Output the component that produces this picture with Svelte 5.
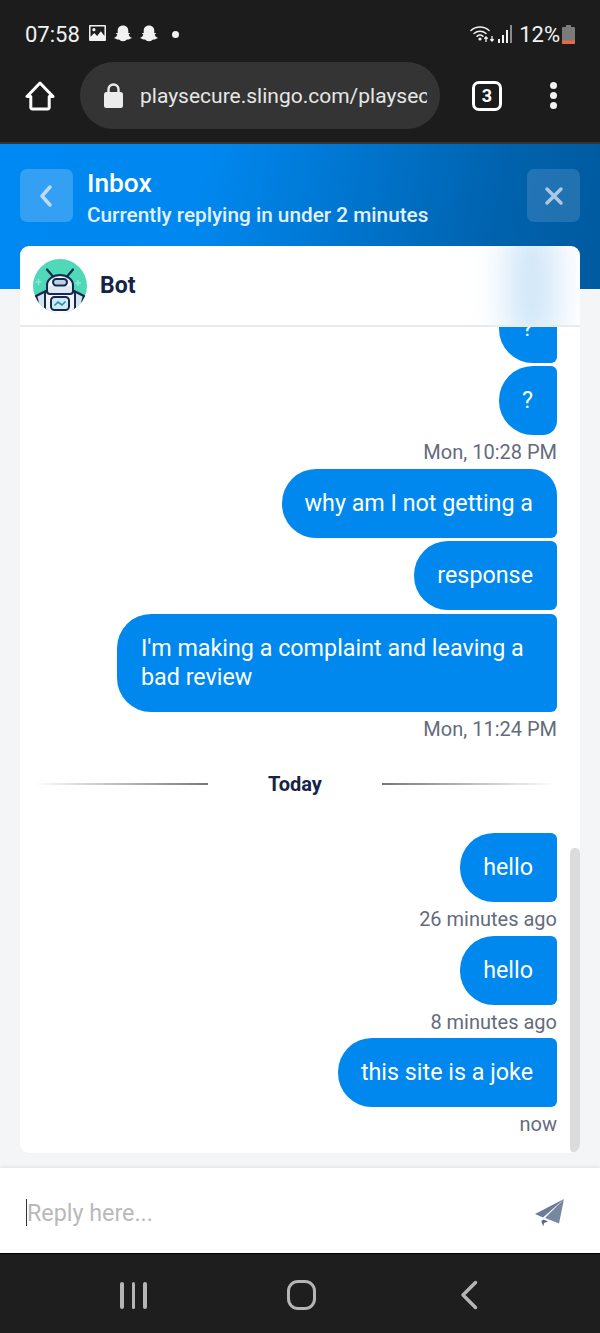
<script>
	const groups = [
		{ items: [{ text: '?', cut: true }, { text: '?', round: true }], time: 'Mon, 10:28 PM' },
		{
			items: [
				{ text: 'why am I not getting a', first: true },
				{ text: 'response' },
				{ text: "I'm making a complaint and leaving a bad review", wide: true }
			],
			time: 'Mon, 11:24 PM'
		}
	];
	const today = [
		{ text: 'hello', time: '26 minutes ago' },
		{ text: 'hello', time: '8 minutes ago' },
		{ text: 'this site is a joke', time: 'now' }
	];
</script>

<div class="phone">
	<div class="chrome">
		<div class="status">
			<span class="clock">07:58</span>
			<svg class="st-pic" viewBox="0 0 18 17" aria-hidden="true">
				<path fill="#f2f2f2" fill-rule="evenodd" d="M1 0h16a1 1 0 0 1 1 1v15a1 1 0 0 1-1 1H1a1 1 0 0 1-1-1V1a1 1 0 0 1 1-1zm.6 1.6v11l4-4 3 3 4-5 3.8 5v-10z" />
				<circle cx="5.2" cy="5" r="1.7" fill="#f2f2f2" />
			</svg>
			{#each [0, 1] as i (i)}
				<svg class="st-ghost" viewBox="0 0 18 18" aria-hidden="true">
					<path fill="#f2f2f2" d="M9 .5c3.400 0 5.300 2.400 5.300 5.300 0 .9 0 1.500-.1 2.100.7.200 1.300-.2 1.700.2.400.5-.2 1-1.300 1.400.4 1.500 1.500 2.600 3.200 3.300-.2.900-1.300.9-2.300 1.100-.4.800-1 .4-2.200.6-1 .2-1.700 1.800-4.300 1.800s-3.300-1.600-4.300-1.800c-1.200-.2-1.800.2-2.200-.6-1-.2-2.100-.2-2.300-1.100 1.700-.7 2.800-1.800 3.200-3.300-1.100-.4-1.700-.9-1.300-1.400.4-.4 1-.0 1.700-.2-.1-.6-.1-1.200-.1-2.100C3.700 2.900 5.600.5 9 .5z" />
				</svg>
			{/each}
			<span class="st-dot"></span>
			<span class="st-fill"></span>
			<svg class="st-wifi" viewBox="0 0 26 18" aria-hidden="true">
				<g fill="none" stroke="#f2f2f2" stroke-width="1.500" stroke-linecap="round">
					<path d="M1 5.500C6 .8 14 .8 19 5.500" />
					<path d="M4 8.500c3.500-3 8.500-3 12 0" />
					<path d="M7 11.300c2-1.600 4-1.600 6 0" />
				</g>
				<circle cx="10" cy="14" r="1.600" fill="#f2f2f2" />
				<path d="M16 17v-5m-1.700 1.800L16 12l1.700 1.800M22 11v5m-1.700-1.800L22 16l1.700-1.800" fill="none" stroke="#f2f2f2" stroke-width="1.300" />
			</svg>
			<svg class="st-signal" viewBox="0 0 15 18" aria-hidden="true">
				<rect x="0" y="14" width="2" height="4" fill="#f2f2f2" />
				<rect x="4" y="10" width="2" height="8" fill="#f2f2f2" />
				<rect x="8" y="5" width="2" height="13" fill="#f2f2f2" />
				<rect x="12" y="0" width="2" height="18" fill="#8a8a8a" />
			</svg>
			<span class="st-pct">12%</span>
			<svg class="st-batt" viewBox="0 0 13 19" aria-hidden="true">
				<path fill="#7b7b7b" d="M4 0h5v2h3a1 1 0 0 1 1 1v15a1 1 0 0 1-1 1H1a1 1 0 0 1-1-1V3a1 1 0 0 1 1-1h3z" />
				<path fill="#e8694a" d="M0 15.500h13V18a1 1 0 0 1-1 1H1a1 1 0 0 1-1-1z" />
			</svg>
		</div>

		<div class="toolbar">
			<svg class="home" viewBox="0 0 30 30" aria-hidden="true">
				<path fill="none" stroke="#fff" stroke-width="3" stroke-linejoin="round" d="M15 2 2 15.500h3.800V26.500a1.500 1.500 0 0 0 1.500 1.500h15.400a1.500 1.500 0 0 0 1.500-1.500V15.500H28z" />
			</svg>
			<div class="url">
				<svg class="lock" viewBox="0 0 19 25" aria-hidden="true">
					<path fill="none" stroke="#ececec" stroke-width="2.400" d="M4.500 11V6.500a5 5 0 0 1 10 0V11" />
					<rect x="0" y="9" width="19" height="16" rx="2.500" fill="#ececec" />
				</svg>
				<span class="url-text">playsecure.slingo.com/playsecure</span>
			</div>
			<span class="tabs">3</span>
			<div class="menu"><i></i><i></i><i></i></div>
		</div>
	</div>

	<main class="page">
		<header class="hero">
			<button type="button" class="hero-btn" aria-label="Back">
				<svg viewBox="0 0 16 24" aria-hidden="true"><path d="M11 3 3 12l8 9" /></svg>
			</button>
			<div class="hero-text">
				<h1>Inbox</h1>
				<p>Currently replying in under 2 minutes</p>
			</div>
			<button type="button" class="hero-btn dim" aria-label="Close">
				<svg viewBox="0 0 24 24" aria-hidden="true"><path d="m5 5 14 14M19 5 5 19" /></svg>
			</button>
		</header>

		<section class="card">
			<div class="card-head">
				<svg class="avatar" viewBox="0 0 54 54" aria-hidden="true">
					<defs>
						<clipPath id="av"><circle cx="27" cy="27" r="27" /></clipPath>
					</defs>
					<g clip-path="url(#av)">
						<rect width="54" height="54" fill="#4fd9b8" />
						<path d="M5.500 20v6M2.500 23h6M45 21v6M42 24h6" stroke="#8ce8d2" stroke-width="1.500" />
						<path d="M14 10.500l6 7M40 10.500l-6 7" stroke="#16294d" stroke-width="2.200" stroke-linecap="round" />
						<path d="M3 37l10-5v20H7z" fill="#d5e3f0" stroke="#16294d" stroke-width="2.500" stroke-linejoin="round" />
						<path d="M51 37l-10-5v20h6z" fill="#d5e3f0" stroke="#16294d" stroke-width="2.500" stroke-linejoin="round" />
						<rect x="12" y="32" width="30" height="26" rx="3" fill="#f2f6fb" stroke="#16294d" stroke-width="2" />
						<path d="M14 26a13 10 0 0 1 26 0v6a3 3 0 0 1-3 3H17a3 3 0 0 1-3-3z" fill="#dfe9f4" stroke="#16294d" stroke-width="2" />
						<path d="M16 27a11 9 0 0 1 22 0z" fill="#f6f9fc" />
						<rect x="20" y="20" width="14" height="6.500" rx="3.200" fill="#bcd0e6" stroke="#16294d" stroke-width="2" />
						<rect x="18" y="38" width="18" height="13" rx="3.500" fill="#cfeaf4" stroke="#16294d" stroke-width="2" />
						<path d="M21.500 46.500l3.500-3.500 4 3 3.500-3.500" fill="none" stroke="#1d8fb8" stroke-width="1.600" />
						<rect y="52.500" width="54" height="2" fill="#fff" />
					</g>
				</svg>
				<span class="bot">Bot</span>
				<span class="smudge"></span>
			</div>

			<div class="thread">
				{#each groups as group, g (g)}
					<div class="group">
						{#each group.items as item, i (i)}
							<div class="bubble" class:cut={item.cut} class:round={item.round} class:first={item.first} class:wide={item.wide}>{item.text}</div>
						{/each}
					</div>
					<div class="time">{group.time}</div>
				{/each}

				<div class="divider">
					<span class="rule left"></span>
					<strong>Today</strong>
					<span class="rule right"></span>
				</div>

				{#each today as msg, i (i)}
					<div class="bubble">{msg.text}</div>
					<div class="time">{msg.time}</div>
				{/each}
				<span class="scrollbar"></span>
			</div>
		</section>
	</main>

	<div class="composer">
		<span class="caret"></span>
		<span class="placeholder">Reply here...</span>
		<svg class="send" viewBox="0 0 30 28" aria-hidden="true">
			<path fill="#6b7c96" d="M29 0 0 15l8 3.500z" />
			<path fill="#77879f" d="M29 0 10 19l14 5.500z" />
			<path fill="#566780" d="M8.500 20.500 13 22.500 9 24l-.7 3.500-2-5.500z" />
		</svg>
	</div>

	<nav class="softkeys">
		<div class="recents"><i></i><i></i><i></i></div>
		<span class="homekey"></span>
		<svg class="backkey" viewBox="0 0 18 30" aria-hidden="true"><path d="M15.500 2.500 3 15l12.500 12.500" /></svg>
	</nav>
</div>

<style>
	:global(body) {
		background: #f4f5f7;
		font-family: Roboto, 'Liberation Sans', sans-serif;
	}

	.phone {
		display: flex;
		flex-direction: column;
		height: 1333px;
		overflow: hidden;
		width: 600px;
	}

	.chrome {
		background: #1c1c1c;
		border-bottom: 2px solid #333;
		box-sizing: border-box;
		flex: none;
		height: 144px;
	}

	.status {
		align-items: center;
		color: #f2f2f2;
		display: flex;
		height: 20px;
		padding: 24px 25px 0;
	}

	.clock {
		font-size: 22px;
		margin-right: 9px;
	}

	.st-pic {
		height: 16px;
		margin: 0 8px 2px 0;
		width: 17px;
	}

	.st-ghost {
		height: 18px;
		margin-right: 8px;
		width: 18px;
	}

	.st-dot {
		background: #f2f2f2;
		border-radius: 50%;
		height: 7px;
		margin-left: 6px;
		width: 7px;
	}

	.st-fill {
		flex: 1;
	}

	.st-wifi {
		height: 18px;
		width: 26px;
	}

	.st-signal {
		height: 18px;
		margin-left: 2px;
		width: 15px;
	}

	.st-pct {
		font-size: 22px;
		margin-left: 6px;
	}

	.st-batt {
		height: 19px;
		margin-left: 2px;
		width: 13px;
	}

	.toolbar {
		align-items: center;
		display: flex;
		margin-top: 18px;
		padding-left: 25px;
	}

	.home {
		height: 30px;
		width: 30px;
	}

	.url {
		align-items: center;
		background: #343434;
		border-radius: 34px;
		box-sizing: border-box;
		display: flex;
		height: 67px;
		margin-left: 25px;
		padding: 0 13px 0 24px;
		width: 360px;
	}

	.lock {
		flex: none;
		height: 25px;
		width: 19px;
	}

	.url-text {
		color: #e6e6e6;
		font-size: 21px;
		margin-left: 17px;
		overflow: hidden;
		white-space: nowrap;
	}

	.tabs {
		align-items: center;
		border: 3px solid #fff;
		border-radius: 7px;
		box-sizing: border-box;
		color: #fff;
		display: flex;
		font-size: 18px;
		font-weight: 700;
		height: 30px;
		justify-content: center;
		margin-left: 32px;
		width: 30px;
	}

	.menu {
		display: flex;
		flex-direction: column;
		gap: 3px;
		margin-left: 48px;
	}

	.menu i {
		background: #f2f2f2;
		border-radius: 50%;
		height: 7px;
		width: 7px;
	}

	.page {
		background: #f4f5f7;
		flex: 1;
		min-height: 0;
	}

	.hero {
		align-items: flex-start;
		background: linear-gradient(100deg, #0089f2 0%, #0088f0 33%, #0062ad 82%, #005a9f 100%);
		box-sizing: border-box;
		display: flex;
		height: 145px;
		padding: 25px 20px 0;
	}

	.hero-btn {
		align-items: center;
		background: rgb(255 255 255 / 20%);
		border: none;
		border-radius: 7px;
		display: flex;
		flex: none;
		height: 53px;
		justify-content: center;
		padding: 0;
		width: 53px;
	}

	.hero-btn.dim {
		background: rgb(255 255 255 / 13%);
	}

	.hero-btn svg {
		fill: none;
		height: 24px;
		stroke: #bcdcf7;
		stroke-linecap: round;
		stroke-linejoin: round;
		stroke-width: 3.500;
		width: 24px;
	}

	.hero-btn.dim svg {
		stroke: #abc9e3;
	}

	.hero-text {
		color: #fff;
		flex: 1;
		margin-left: 14px;
	}

	.hero-text h1 {
		font-size: 26.300px;
		font-weight: 500;
		line-height: 28px;
		margin: 0;
	}

	.hero-text p {
		color: #e0f1ff;
		font-size: 20.750px;
		font-weight: 500;
		line-height: 24px;
		margin: 6px 0 0;
	}

	.card {
		background: #fff;
		border-radius: 9px;
		height: 907px;
		margin: -43px 20px 0;
		overflow: hidden;
		position: relative;
	}

	.card-head {
		align-items: center;
		border-bottom: 2px solid #e8eaec;
		box-sizing: border-box;
		display: flex;
		height: 81px;
		overflow: hidden;
		padding: 0 13px 0;
		position: relative;
	}

	.avatar {
		height: 54px;
		width: 54px;
	}

	.bot {
		color: #152347;
		font-size: 23px;
		font-weight: 700;
		margin-left: 13px;
	}

	.smudge {
		background: #bcdcf6;
		bottom: -20px;
		filter: blur(20px);
		position: absolute;
		right: 30px;
		top: -20px;
		width: 36px;
	}

	.thread {
		box-sizing: border-box;
		display: flex;
		flex-direction: column;
		height: 826px;
		justify-content: flex-end;
		overflow: hidden;
		padding: 0 23px 12.500px;
		position: relative;
	}

	.group {
		display: flex;
		flex: none;
		flex-direction: column;
		gap: 3.500px;
	}

	.bubble {
		align-self: flex-end;
		background: #0088ee;
		border-radius: 34px 6px 6px 34px;
		box-sizing: border-box;
		color: #fff;
		flex: none;
		font-size: 23.300px;
		line-height: 29px;
		margin-left: auto;
		max-width: 440px;
		padding: 20px 24px 20px 23px;
	}

	.bubble.wide {
		padding-left: 24px;
	}

	.bubble.round {
		border-bottom-right-radius: 14px;
	}

	.bubble.first {
		border-top-right-radius: 26px;
	}

	.time {
		color: #646b7c;
		flex: none;
		font-size: 20px;
		line-height: 32.500px;
		padding-top: 1px;
		text-align: right;
	}

	.divider {
		align-items: center;
		display: flex;
		flex: none;
		height: 77px;
		margin: 0 0 11px -10px;
	}

	.divider strong {
		color: #152347;
		font-size: 20px;
		font-weight: 700;
		text-align: center;
		width: 174px;
	}

	.rule {
		flex: 1;
		height: 2px;
	}

	.rule.left {
		background: linear-gradient(90deg, transparent, #777);
	}

	.rule.right {
		background: linear-gradient(90deg, #777, transparent);
	}

	.scrollbar {
		background: #dcdcdc;
		border-radius: 5px;
		bottom: 0;
		height: 305px;
		position: absolute;
		right: 0;
		width: 10px;
	}

	.composer {
		align-items: center;
		background: #fff;
		box-shadow: 0 -2px 3px rgb(0 0 0 / 6%);
		box-sizing: border-box;
		display: flex;
		flex: none;
		height: 85px;
		padding: 4px 35px 0 26px;
		position: relative;
	}

	.caret {
		background: #333;
		height: 27px;
		width: 1px;
	}

	.placeholder {
		color: #b9b9b9;
		flex: 1;
		font-size: 23.300px;
	}

	.send {
		height: 28px;
		width: 30px;
	}

	.softkeys {
		align-items: center;
		background: #1e1e1e;
		border-top: 1px solid #000;
		box-sizing: border-box;
		display: flex;
		flex: none;
		height: 80px;
		padding: 3px 0 0 120px;
	}

	.recents {
		display: flex;
		gap: 8px;
	}

	.recents i {
		background: #b5b5b5;
		border-radius: 2px;
		height: 27px;
		width: 3.500px;
	}

	.homekey {
		border: 3.500px solid #b5b5b5;
		border-radius: 11px;
		box-sizing: border-box;
		height: 30px;
		margin-left: 140px;
		width: 29px;
	}

	.backkey {
		fill: none;
		height: 30px;
		margin-left: 144px;
		stroke: #b5b5b5;
		stroke-linecap: round;
		stroke-linejoin: round;
		stroke-width: 3.500;
		width: 18px;
	}
</style>
